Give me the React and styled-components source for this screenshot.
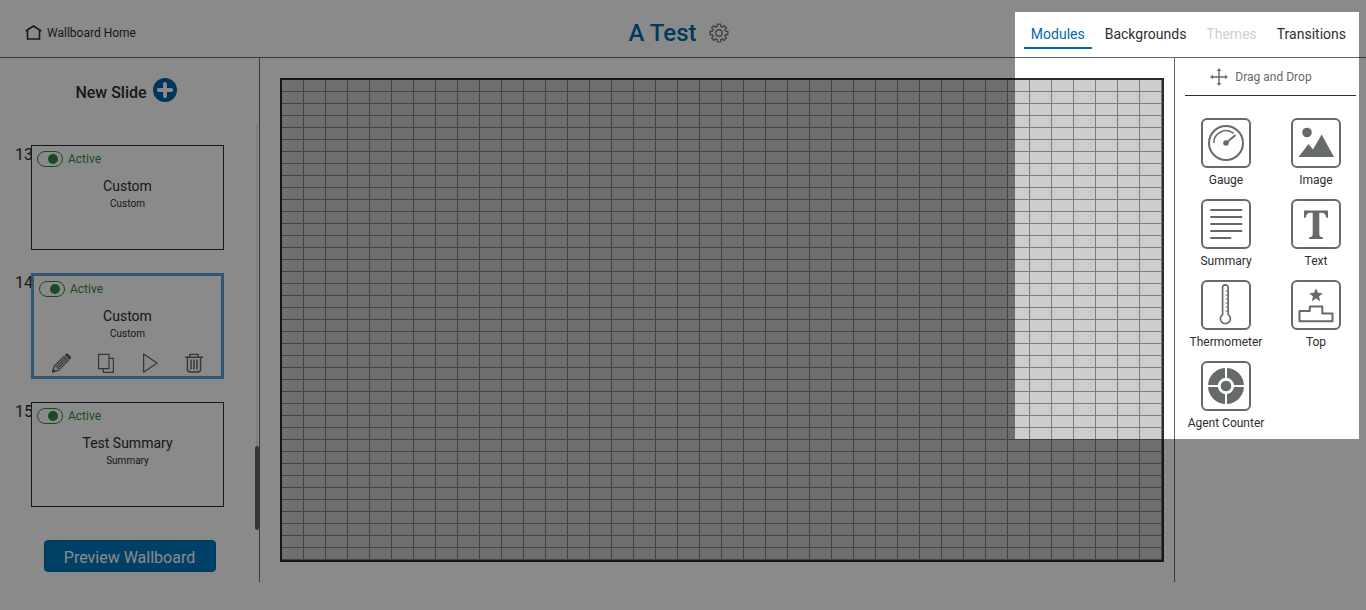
import { useState } from "react";
import styled, { createGlobalStyle } from "styled-components";

const slides = [
  { id: 13, name: "Custom", type: "Custom" },
  { id: 14, name: "Custom", type: "Custom" },
  { id: 15, name: "Test Summary", type: "Summary" },
];

const tabs = [
  { label: "Modules" },
  { label: "Backgrounds" },
  { label: "Themes", disabled: true },
  { label: "Transitions" },
];

const HomeIcon = () => (
  <svg width="17" height="15" viewBox="0 0 17 15" fill="none">
    <path d="M0.8 6 8.5 1 16.2 6M2.5 5.2V14H14.5V5.2" stroke="#2e2e2e" strokeWidth="1.6" />
  </svg>
);

const cogPoints = Array.from({ length: 8 })
  .flatMap((_, i) =>
    [
      [-14, 6.8],
      [-11, 9],
      [11, 9],
      [14, 6.8],
    ].map(([offset, radius]) => {
      const angle = ((i * 45 + offset) * Math.PI) / 180;
      const x = 10 + radius * Math.sin(angle);
      const y = 10 - radius * Math.cos(angle);
      return `${x.toFixed(2)},${y.toFixed(2)}`;
    })
  )
  .join(" ");

const GearIcon = () => (
  <svg width="20" height="20" viewBox="0 0 20 20" fill="none" stroke="#7d7d7d" strokeWidth="1.4">
    <polygon points={cogPoints} strokeLinejoin="round" />
    <circle cx="10" cy="10" r="3.2" />
  </svg>
);

const PlusIcon = () => (
  <svg width="24" height="24" viewBox="0 0 24 24">
    <circle cx="12" cy="12" r="12" fill="#0065a4" />
    <path d="M12 5.8V18.2M5.8 12H18.2" stroke="#fff" strokeWidth="3.8" strokeLinecap="round" />
  </svg>
);

const PencilIcon = () => (
  <svg width="20" height="20" viewBox="0 0 20 20" fill="none" stroke="#666" strokeWidth="1.3">
    <path d="M1.8 18.8 3.2 13.2 13 3.4 17.2 7.6 7.4 17.4Z" strokeLinejoin="round" />
    <path d="M4.8 14.4 14 5.2M6.2 15.8 15.4 6.6" />
    <path d="M14.6 2 15.4 1.2Q15.8 0.8 16.4 1.2L19.2 4Q19.6 4.6 19.2 5.2L18.4 6Z" fill="#666" />
    <path d="M1.8 18.8 2.4 16.5 4.1 18.2Z" fill="#666" />
  </svg>
);

const CopyIcon = () => (
  <svg width="20" height="20" viewBox="0 0 20 20" fill="none" stroke="#666" strokeWidth="1.2">
    <path d="M3.6 1.4H14V15.6H3.6Z" />
    <path d="M14 5.4H18.4V19.4H8.4V15.6" />
  </svg>
);

const PlayIcon = () => (
  <svg width="20" height="20" viewBox="0 0 20 20" fill="none" stroke="#666" strokeWidth="1.3">
    <path d="M3.6 1V19.2L17 10Z" strokeLinejoin="round" />
  </svg>
);

const TrashIcon = () => (
  <svg width="20" height="20" viewBox="0 0 20 20" fill="none" stroke="#666" strokeWidth="1.4">
    <path d="M1 4.2H19M5.8 4V1.4H14.2V4M3.4 4.4V16.4Q3.6 19 6.2 19H13.8Q16.4 19 16.6 16.4V4.4" />
    <path d="M7 6.4V16.6M10 6.4V16.6M13 6.4V16.6" />
  </svg>
);

const MoveIcon = () => (
  <svg width="18" height="18" viewBox="0 0 18 18">
    <path d="M9 2V16M2 9H16" stroke="#666a69" strokeWidth="1.4" />
    <path d="M9 0 11.2 3H6.8ZM9 18 6.8 15H11.2ZM0 9 3 6.8V11.2ZM18 9 15 11.2V6.8Z" fill="#666a69" />
  </svg>
);

const GaugeArt = () => (
  <>
    <circle cx="25" cy="25" r="17" strokeWidth="2" />
    <path d="M12.8 25A12.2 12.2 0 0 1 32.5 15.3" strokeWidth="1.5" />
    <path d="M25 25 34.6 17" strokeWidth="1.8" />
    <circle cx="25" cy="25" r="2.8" fill="currentColor" stroke="none" />
  </>
);

const ImageArt = () => (
  <g fill="currentColor" stroke="none">
    <circle cx="16" cy="14.5" r="4.8" />
    <path d="M7.5 39 17.5 26 22 31.4 30.6 16.5 43 39Z" />
  </g>
);

const SummaryArt = () => (
  <path d="M10 11H40.5M10 18H40.5M10 25H40.5M10 32H40.5M10 39H29.5" strokeWidth="2" strokeLinecap="round" />
);

const TextArt = () => (
  <path
    d="M13 11.5H37V18.8H35.2Q34.6 13.8 30.8 13.8H28.3V35.6Q28.3 38 32 38.4V40H18V38.4Q21.7 38 21.7 35.6V13.8H19.2Q15.4 13.8 14.8 18.8H13Z"
    fill="currentColor"
    stroke="none"
  />
);

const ThermometerArt = () => (
  <>
    <path d="M21.6 34.6V7.6A2.8 2.8 0 0 1 27.2 7.6V34.6A5 5 0 1 1 21.6 34.6Z" strokeWidth="1.7" />
    <path d="M24.6 11H27M24.6 15H27M24.6 19H27M24.6 23H27M24.6 27H27M24.6 31H27" strokeWidth="1.2" />
  </>
);

const TopArt = () => (
  <>
    <path
      d="M25 8.2 26.9 12.8 31.8 13.2 28 16.4 29.2 21.2 25 18.6 20.8 21.2 22 16.4 18.2 13.2 23.1 12.8Z"
      fill="currentColor"
      stroke="none"
    />
    <path d="M8.5 31H18.8V26.5H31.3V33.5H41.5V41.2H8.5Z" strokeWidth="2" strokeLinejoin="round" />
  </>
);

const AgentArt = () => (
  <>
    <circle cx="25" cy="25" r="13" strokeWidth="10" />
    <path d="M25 6V44M6 25H44" stroke="#fff" strokeWidth="2" />
    <circle cx="25" cy="25" r="6.6" fill="currentColor" stroke="#fff" strokeWidth="2.6" />
  </>
);

const modules = [
  { label: "Gauge", Art: GaugeArt },
  { label: "Image", Art: ImageArt },
  { label: "Summary", Art: SummaryArt },
  { label: "Text", Art: TextArt },
  { label: "Thermometer", Art: ThermometerArt },
  { label: "Top", Art: TopArt },
  { label: "Agent Counter", Art: AgentArt },
];

const slideActions = [
  { label: "Edit", Icon: PencilIcon },
  { label: "Copy", Icon: CopyIcon },
  { label: "Play", Icon: PlayIcon },
  { label: "Delete", Icon: TrashIcon },
];

const Slide = ({ slide, selected, onSelect }) => {
  const [active, setActive] = useState(true);

  return (
    <SlideRow>
      <SlideNumber>{slide.id}</SlideNumber>
      <SlideCard $selected={selected} onClick={onSelect}>
        <ToggleLabel>
          <Toggle type="checkbox" checked={active} onChange={() => setActive(!active)} />
          Active
        </ToggleLabel>
        <SlideName>{slide.name}</SlideName>
        <SlideType>{slide.type}</SlideType>
        {selected && (
          <SlideActions>
            {slideActions.map(({ label, Icon }) => (
              <IconButton key={label} aria-label={label}>
                <Icon />
              </IconButton>
            ))}
          </SlideActions>
        )}
      </SlideCard>
    </SlideRow>
  );
};

const App = () => {
  const [tab, setTab] = useState("Modules");
  const [selected, setSelected] = useState(14);

  return (
    <Page>
      <GlobalStyle />
      <Header>
        <HomeLink href="#">
          <HomeIcon />
          Wallboard Home
        </HomeLink>
        <TitleGroup>
          <Title>A Test</Title>
          <IconButton aria-label="Settings">
            <GearIcon />
          </IconButton>
        </TitleGroup>
        <Tabs>
          {tabs.map(({ label, disabled }) => (
            <Tab key={label} disabled={disabled} $current={tab === label} onClick={() => setTab(label)}>
              {label}
            </Tab>
          ))}
        </Tabs>
      </Header>

      <Body>
        <Sidebar>
          <NewSlide>
            New Slide
            <PlusIcon />
          </NewSlide>
          <SlideArea>
            <SlideList>
              {slides.map((slide) => (
                <Slide
                  key={slide.id}
                  slide={slide}
                  selected={slide.id === selected}
                  onSelect={() => setSelected(slide.id)}
                />
              ))}
            </SlideList>
            <ScrollTrack>
              <ScrollThumb />
            </ScrollTrack>
          </SlideArea>
          <PreviewButton>Preview Wallboard</PreviewButton>
        </Sidebar>

        <Main>
          <Canvas />
        </Main>

        <ModulePanel>
          <DragHint>
            <MoveIcon />
            Drag and Drop
          </DragHint>
          <ModuleGrid>
            {modules.map(({ label, Art }) => (
              <Module key={label} draggable>
                <ModuleIcon viewBox="0 0 50 50">
                  <rect x="1" y="1" width="48" height="48" rx="5" strokeWidth="2" />
                  <Art />
                </ModuleIcon>
                {label}
              </Module>
            ))}
          </ModuleGrid>
        </ModulePanel>
      </Body>
      <Spotlight />
    </Page>
  );
};

const GlobalStyle = createGlobalStyle`
  * {
    box-sizing: border-box;
  }

  body {
    margin: 0;
    background-color: #fff;
    color: #2e2e2e;
    font-family: Roboto, "Liberation Sans", sans-serif;
  }

  button {
    font-family: inherit;
    color: inherit;
    cursor: pointer;
  }

  svg {
    display: block;
    flex-shrink: 0;
  }
`;

const Page = styled.div`
  display: flex;
  flex-direction: column;
  min-height: 100vh;
  padding-bottom: 28px;
`;

const Header = styled.header`
  display: grid;
  grid-template-columns: 1fr auto 1fr;
  align-items: center;
  height: 58px;
  padding: 0 13px;
  border-bottom: 1px solid #666;
`;

const HomeLink = styled.a`
  display: flex;
  align-items: center;
  justify-self: start;
  gap: 5px;
  padding: 8px 12px 0;
  font-size: 12px;
  line-height: 16px;
  color: inherit;
  text-decoration: none;
`;

const TitleGroup = styled.div`
  display: flex;
  align-items: center;
  gap: 12px;
  padding: 8px 9px 0 0;
`;

const Title = styled.h1`
  margin: 0;
  font-size: 24px;
  line-height: 30px;
  font-weight: 500;
  color: #0069aa;
`;

const IconButton = styled.button`
  display: flex;
  padding: 0;
  border: none;
  background: none;
`;

const Tabs = styled.nav`
  display: flex;
  justify-self: end;
  align-self: end;
  gap: 6px;
  padding-bottom: 8px;
`;

const Tab = styled.button`
  padding: 0 7px 4px;
  border: none;
  border-bottom: 2px solid ${(props) => (props.$current ? "#0069aa" : "transparent")};
  background: none;
  font-size: 14px;
  line-height: 18px;
  color: ${(props) => (props.$current ? "#0069aa" : "#2e2e2e")};

  &:disabled {
    color: #d0d0d0;
  }
`;

const Body = styled.div`
  display: flex;
  flex: 1;
`;

const Sidebar = styled.aside`
  display: flex;
  flex-direction: column;
  width: 260px;
  border-right: 1px solid #666;
`;

const NewSlide = styled.button`
  display: flex;
  align-items: flex-end;
  justify-content: center;
  gap: 6px;
  height: 66px;
  padding: 0 7px 22px 0;
  border: none;
  background: none;
  font-size: 16px;
  font-weight: 500;
`;

const SlideArea = styled.div`
  display: flex;
  height: 406px;
`;

const SlideList = styled.div`
  display: flex;
  flex: 1;
  flex-direction: column;
  gap: 23px;
  padding: 21px 31px 0 15px;
`;

const SlideRow = styled.div`
  display: flex;
`;

const SlideNumber = styled.span`
  width: 16px;
  font-size: 16px;
  line-height: 20px;
`;

const SlideCard = styled.article`
  position: relative;
  flex: 1;
  min-height: 105px;
  padding: 5px 5px 3px;
  border: ${(props) => (props.$selected ? "3px solid #5ba0d6" : "1px solid #2e2e2e")};
  background-color: #fff;
  text-align: center;
`;

const ToggleLabel = styled.label`
  display: flex;
  align-items: center;
  gap: 5px;
  height: 16px;
  font-size: 12px;
  color: #2f8a3d;
`;

const Toggle = styled.input`
  appearance: none;
  display: flex;
  align-items: center;
  width: 26px;
  height: 16px;
  margin: 0;
  padding: 0 4px;
  border: 1px solid #2f8a3d;
  border-radius: 8px;

  &::before {
    content: "";
    width: 10px;
    height: 10px;
    border-radius: 50%;
    background-color: #2f8a3d;
  }

  &:checked {
    justify-content: flex-end;
  }
`;

const SlideName = styled.h2`
  margin: 10px 0 0;
  font-size: 14px;
  line-height: 19px;
  font-weight: 400;
`;

const SlideType = styled.p`
  margin: 0;
  font-size: 10px;
  line-height: 15px;
`;

const SlideActions = styled.div`
  display: grid;
  grid-template-columns: repeat(4, 1fr);
  justify-items: center;
  margin-top: 12px;
`;

const ScrollTrack = styled.div`
  display: flex;
  flex-direction: column;
  align-items: center;
  justify-content: flex-end;
  width: 4px;
  background: linear-gradient(#ebebeb, #ebebeb) center / 2px 100% no-repeat;
`;

const ScrollThumb = styled.div`
  width: 4px;
  height: 84px;
  border-radius: 2px;
  background-color: #606060;
`;

const PreviewButton = styled.button`
  align-self: center;
  width: 172px;
  height: 32px;
  margin-top: 10px;
  padding: 2px 0 0;
  border: 1px solid #0069aa;
  border-radius: 4px;
  background-color: #0076bc;
  color: #fff;
  font-size: 16px;
`;

const Main = styled.main`
  display: flex;
  flex: 1;
  padding: 20px 10px 20px 20px;
`;

const Canvas = styled.div`
  flex: 1;
  border: 2px solid #2b2b2b;
  background-color: #cdcdcd;
  background-image: linear-gradient(to left, #7d7d7d 1px, transparent 1px),
    linear-gradient(to top, #7d7d7d 1px, transparent 1px);
  background-size: calc(100% / 40) calc(100% / 40);
`;

const ModulePanel = styled.aside`
  width: 192px;
  padding: 0 10px;
  border-left: 1px solid #666;
`;

const DragHint = styled.div`
  display: flex;
  align-items: center;
  justify-content: center;
  gap: 7px;
  height: 38px;
  padding-right: 19px;
  border-bottom: 1px solid #2e2e2e;
  font-size: 12px;
  color: #666a69;
`;

const ModuleGrid = styled.div`
  display: grid;
  grid-template-columns: 90px 90px;
  justify-content: end;
  row-gap: 11px;
  margin: 22px -5px 0;
`;

const Module = styled.div`
  display: flex;
  flex-direction: column;
  align-items: center;
  gap: 5px;
  font-size: 12px;
  line-height: 15px;
  white-space: nowrap;
  cursor: grab;
`;

const ModuleIcon = styled.svg`
  width: 50px;
  height: 50px;
  color: #666a69;
  fill: none;
  stroke: currentColor;
`;

const Spotlight = styled.div`
  position: absolute;
  top: 12px;
  right: 7px;
  width: 344px;
  height: 427px;
  box-shadow: 0 0 0 200vmax rgba(0, 0, 0, 0.46);
  pointer-events: none;
`;

export default App;
